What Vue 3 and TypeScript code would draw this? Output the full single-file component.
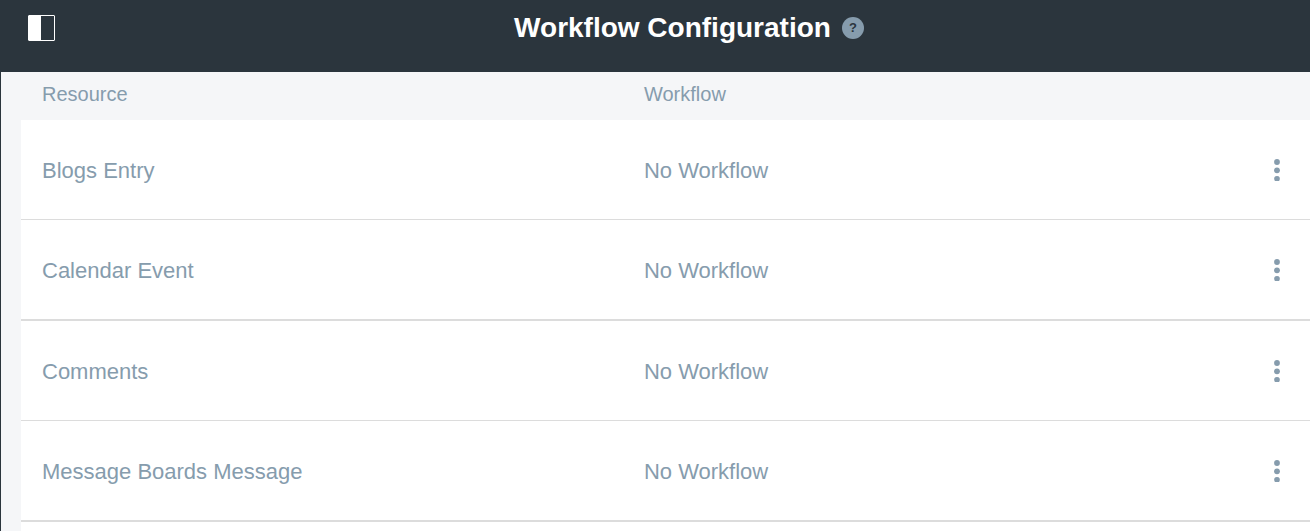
<script setup lang="ts">
interface WorkflowRow {
  resource: string
  workflow: string
}

const rows: WorkflowRow[] = [
  { resource: 'Blogs Entry', workflow: 'No Workflow' },
  { resource: 'Calendar Event', workflow: 'No Workflow' },
  { resource: 'Comments', workflow: 'No Workflow' },
  { resource: 'Message Boards Message', workflow: 'No Workflow' },
]
</script>

<template>
  <div class="page">
    <header class="bar">
      <button type="button" class="icon-button" aria-label="Toggle menu">
        <svg width="27" height="26" viewBox="0 0 27 26" aria-hidden="true">
          <rect x="0.5" y="0.5" width="26" height="25" rx="0.5" fill="none" stroke="#fff" />
          <rect x="1" y="1" width="12" height="24" fill="#fff" />
        </svg>
      </button>
      <div class="heading">
        <h1 class="title">Workflow Configuration</h1>
        <button type="button" class="help">?</button>
      </div>
    </header>
    <main class="content">
      <table class="table">
        <thead>
          <tr>
            <th scope="col" class="resource">Resource</th>
            <th scope="col">Workflow</th>
            <td class="actions"></td>
          </tr>
        </thead>
        <tbody>
          <tr v-for="row in rows" :key="row.resource">
            <td>{{ row.resource }}</td>
            <td>{{ row.workflow }}</td>
            <td class="actions">
              <button type="button" class="icon-button" :aria-label="`Actions for ${row.resource}`">
                <svg width="6" height="23" viewBox="0 0 6 23" fill="#869cad" aria-hidden="true">
                  <circle cx="3" cy="3" r="2.9" />
                  <circle cx="3" cy="11.3" r="2.9" />
                  <path d="M0.6 18 Q1.2 17 3 16.9 Q4.8 17 5.4 18 Q6.4 20 5 22 H1 Q-0.4 20 0.6 18Z" />
                </svg>
              </button>
            </td>
          </tr>
        </tbody>
      </table>
    </main>
  </div>
</template>

<style>
body {
  margin: 0;
}
</style>

<style scoped>
.page {
  display: flex;
  flex-direction: column;
  box-sizing: border-box;
  min-height: 100vh;
  border-left: 1px solid #2b353d;
  background: #f5f6f8;
  color: #869cad;
  font-family: "Liberation Sans", Arial, sans-serif;
}

.bar {
  display: flex;
  align-items: center;
  box-sizing: border-box;
  height: 72px;
  padding: 0 27px 16px;
  background: #2b353d;
}

.icon-button {
  display: flex;
  padding: 0;
  border: 0;
  background: none;
  cursor: pointer;
}

.heading {
  display: flex;
  flex: 1;
  align-items: center;
  justify-content: center;
  gap: 11px;
  padding-left: 40px;
}

.title {
  margin: 0;
  color: #fff;
  font-size: 28px;
  line-height: 32px;
  font-weight: 700;
}

.help {
  width: 22px;
  height: 22px;
  padding: 0;
  border: 0;
  border-radius: 50%;
  background: #869cad;
  color: #2b353d;
  font: 700 13px/22px "Liberation Sans", Arial, sans-serif;
  cursor: pointer;
}

.content {
  flex: 1;
  margin-left: 20px;
  background: #fff;
}

.table {
  width: 100%;
  border-collapse: separate;
  border-spacing: 0;
  table-layout: fixed;
}

.table th,
.table td {
  box-sizing: border-box;
  padding: 0 21px;
  text-align: left;
  vertical-align: middle;
}

.table thead th,
.table thead td {
  height: 48px;
  padding-bottom: 4px;
  background: #f5f6f8;
  font-size: 20px;
  line-height: 24px;
  font-weight: 400;
}

.table .resource {
  width: 46.7%;
}

.table tbody td {
  height: 100px;
  padding-top: 2px;
  border-bottom: 1px solid #dcdcdc;
  font-size: 22px;
  line-height: 26px;
}

.table tbody tr:nth-child(even) td {
  height: 101px;
  border-bottom-width: 2px;
}

.table .actions {
  width: 78px;
  padding-right: 30px;
}

.actions .icon-button {
  margin-left: auto;
}
</style>
